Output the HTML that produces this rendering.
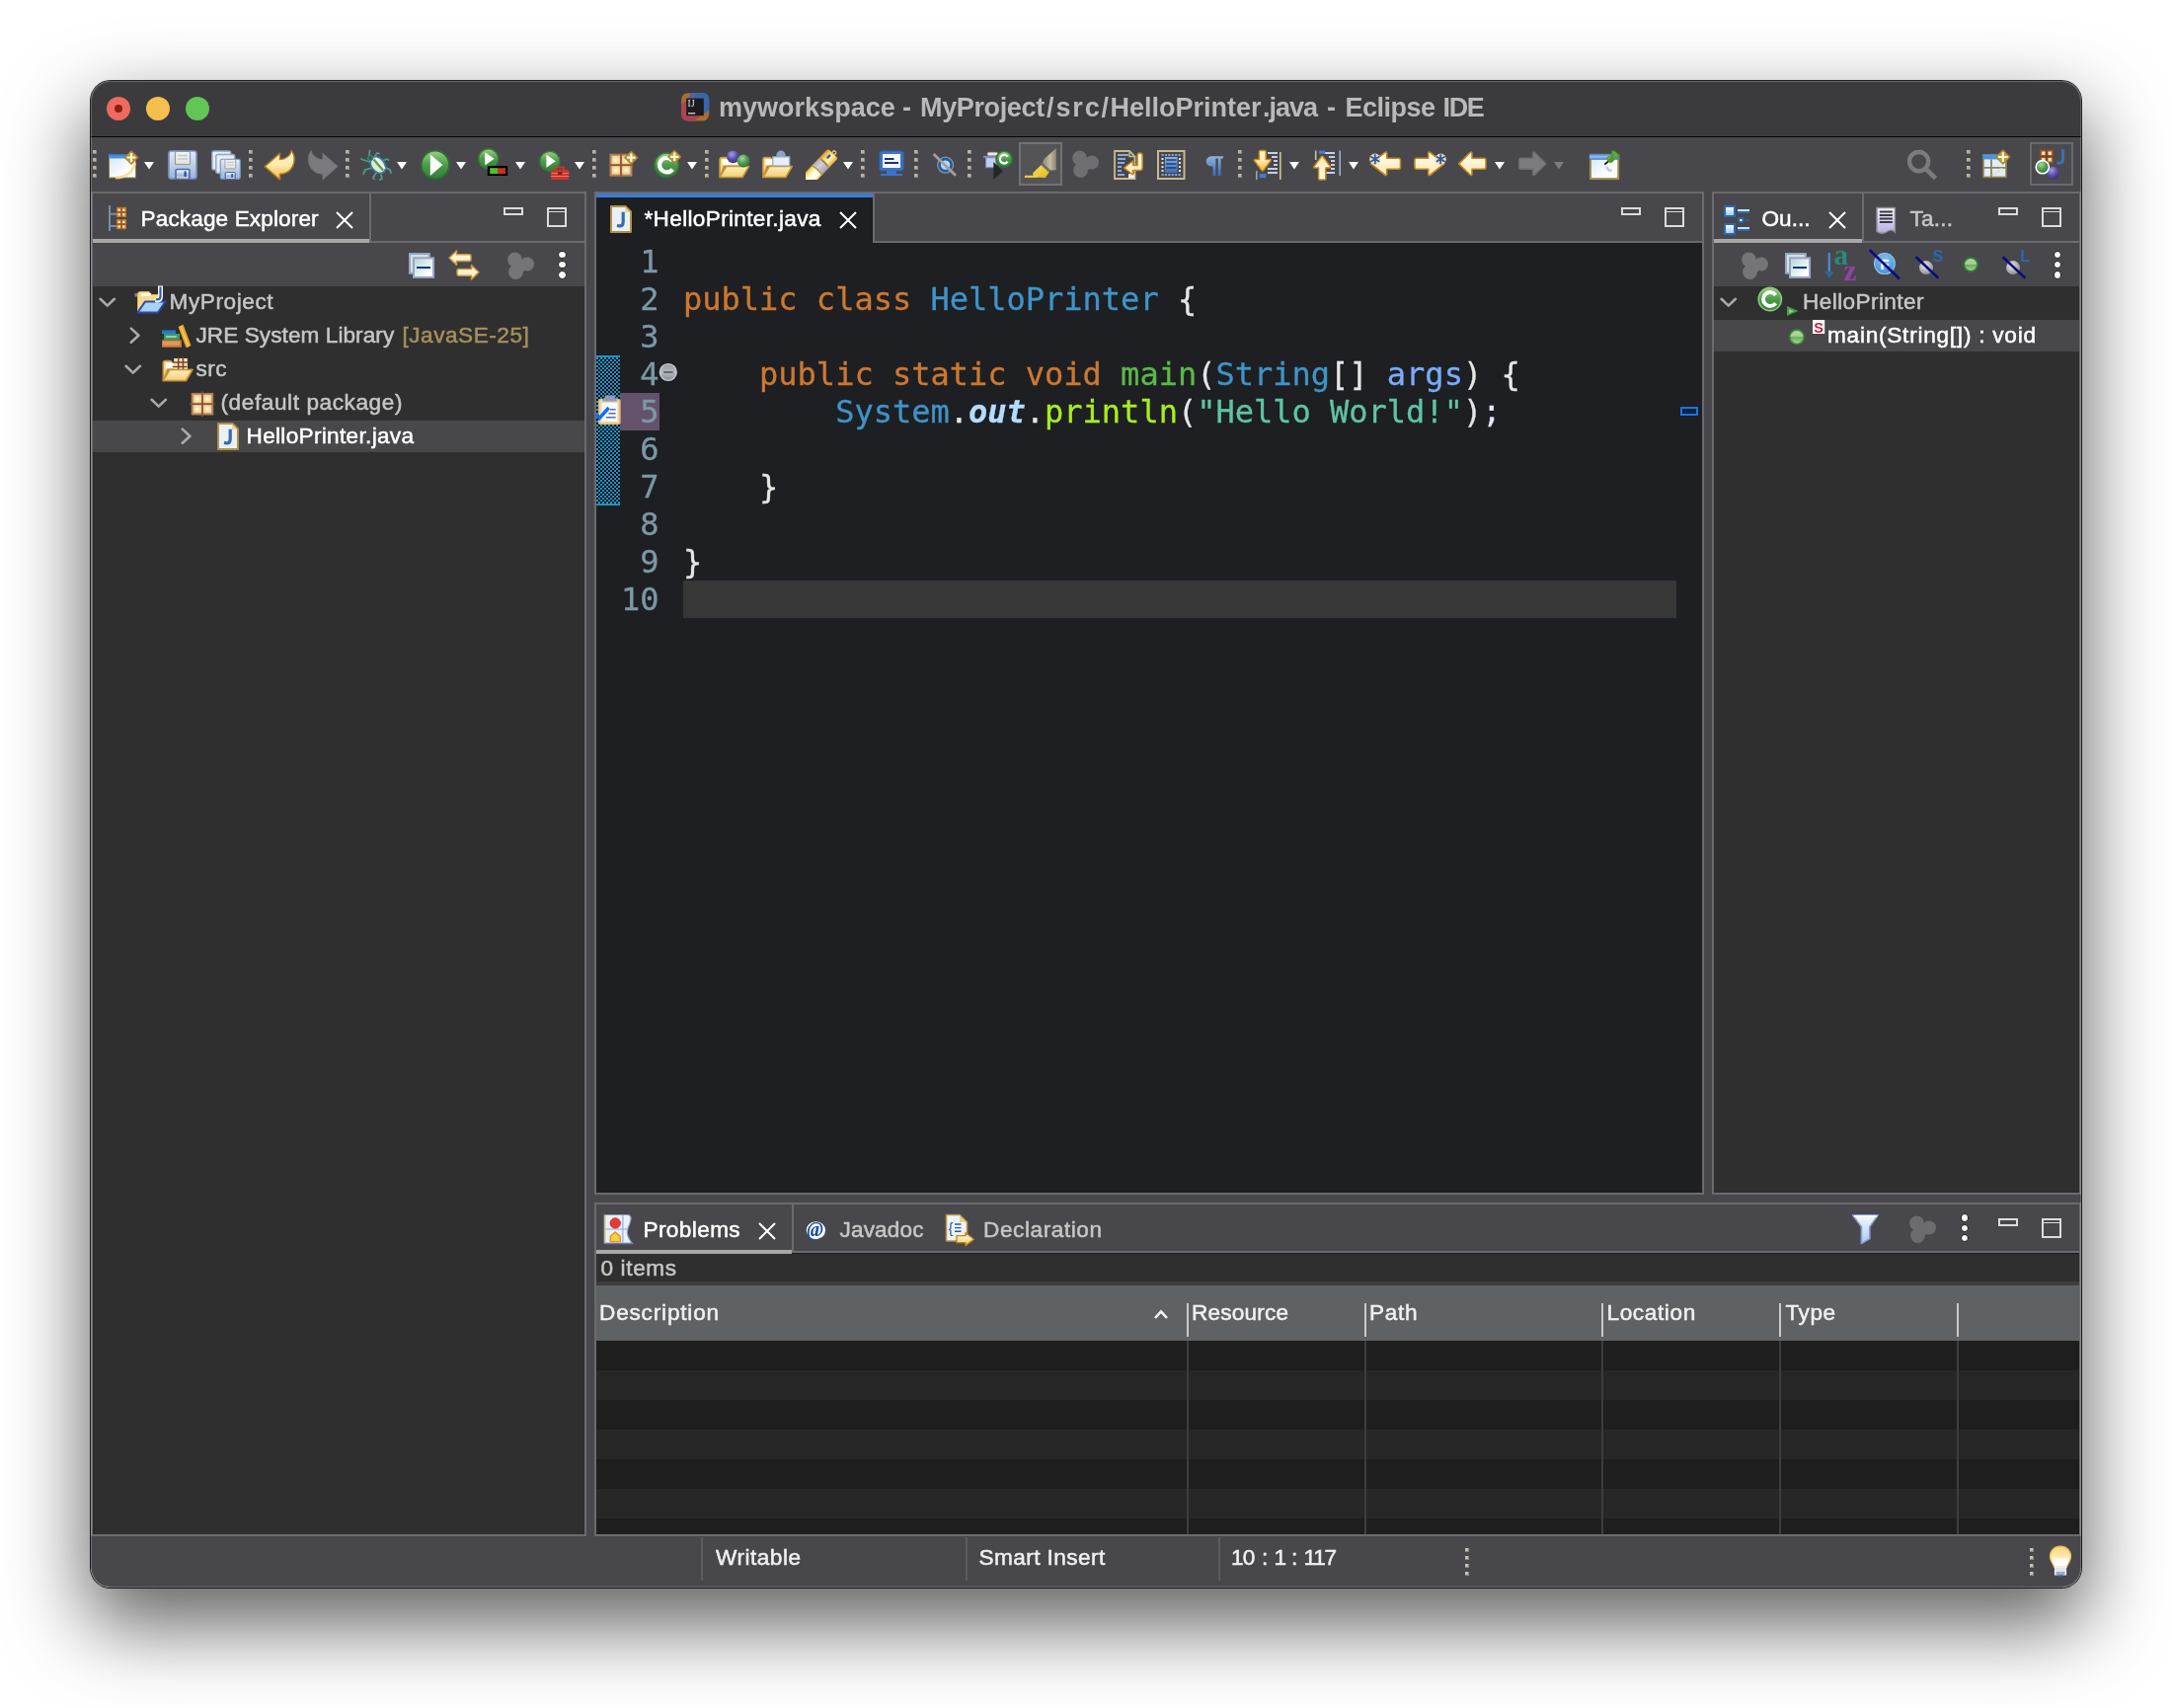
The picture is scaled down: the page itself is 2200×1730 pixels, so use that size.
<!DOCTYPE html>
<html><head><meta charset="utf-8"><title>Eclipse IDE</title>
<style>
*{box-sizing:border-box;margin:0;padding:0}
html,body{width:2200px;height:1730px;background:#fff;overflow:hidden}
body{font-family:"Liberation Sans",sans-serif;position:relative}
#win{position:absolute;left:92px;top:82px;width:2016px;height:1526px;border-radius:20px;overflow:hidden;background:#48484c;}
#shadow{position:absolute;left:92px;top:82px;width:2016px;height:1526px;border-radius:20px;box-shadow:0 0 0 1px rgba(0,0,0,.85),0 34px 80px 4px rgba(0,0,0,.62)}
#pg{position:absolute;left:-92px;top:-82px;width:2200px;height:1730px;will-change:transform}
#pg div,#pg span,#pg svg{position:absolute}
#pg span{white-space:pre}
#pg span span,#pg .code span{position:static}
#hl{position:absolute;left:92px;top:82px;width:2016px;height:1526px;border-radius:20px;box-shadow:inset 0 0 0 1px rgba(255,255,255,.22);pointer-events:none}
.code,.ln{-webkit-text-stroke:0.3px currentColor}
.code{font-family:"DejaVu Sans Mono","Liberation Mono",monospace;font-size:32px;line-height:38px;white-space:pre;left:692.5px}
.ln{font-family:"DejaVu Sans Mono","Liberation Mono",monospace;font-size:32px;line-height:38px;color:#7a98a6;text-align:right;width:66px;left:602px;white-space:pre}
.k{color:#cc7832}.ty{color:#3f94c8}
</style></head><body>
<div id="shadow"></div>
<div id="win"><div id="pg">
<!-- TITLEBAR -->
<div style="left:92px;top:82px;width:2016px;height:56px;background:#3b3b3d"></div>
<div style="left:92px;top:137.7px;width:2016px;height:1.7px;background:#060606"></div>
<div style="left:108px;top:98px;width:24px;height:24px;border-radius:50%;background:#ee6a5f"></div>
<div style="left:116px;top:106px;width:8px;height:8px;border-radius:50%;background:#8e1a10"></div>
<div style="left:148px;top:98px;width:24px;height:24px;border-radius:50%;background:#f5bf4f"></div>
<div style="left:188px;top:98px;width:24px;height:24px;border-radius:50%;background:#62c554"></div>
<!-- PACKAGE EXPLORER -->
<div style="left:92px;top:194px;width:502px;height:1362px;background:#2f2f2f;border:2px solid #6b6b6d"></div>
<div style="left:94px;top:196px;width:498px;height:48px;background:#48484c"></div>
<div style="left:94px;top:244px;width:498px;height:2px;background:#6b6b6d"></div>
<div style="left:94px;top:246px;width:498px;height:44px;background:#48484c"></div>
<div style="left:374px;top:196px;width:2px;height:48px;background:#6b6b6d"></div>
<div style="left:94px;top:242px;width:280px;height:4px;background:#a8a8a8"></div>
<div style="left:94px;top:426px;width:498px;height:32px;background:#48484a"></div>
<!-- EDITOR -->
<div style="left:602px;top:194px;width:1124px;height:1016px;background:#1e1f22;border:2px solid #6b6b6d"></div>
<div style="left:884px;top:196px;width:840px;height:48px;background:#48484c"></div>
<div style="left:884px;top:244px;width:840px;height:2px;background:#6b6b6d"></div>
<div style="left:884px;top:196px;width:2px;height:50px;background:#6b6b6d"></div>
<div style="left:604px;top:196px;width:280px;height:4px;background:#3b7cd6"></div>
<div id="hatch" style="left:604px;top:360px;width:24px;height:152px;background-color:#1a96c8;background-image:linear-gradient(45deg,#1a0505 25%,transparent 25%,transparent 75%,#1a0505 75%),linear-gradient(45deg,#1a0505 25%,transparent 25%,transparent 75%,#1a0505 75%);background-size:4px 4px;background-position:0 2px,2px 0"></div><div style="left:604px;top:360px;width:24px;height:2px;background:#1a96c8"></div><div style="left:604px;top:510px;width:24px;height:2px;background:#1a96c8"></div>
<div style="left:628px;top:398px;width:40px;height:38px;background:#63526a"></div>
<div style="left:692px;top:588px;width:1006px;height:38px;background:#373737"></div>
<div class="ln" style="top:245.5px;left:601.5px">1
2
3
4
5
6
7
8
9
10</div>
<div class="code" style="top:245.5px;left:692px;color:#e6e6e6">
<span class="k">public class</span> <span class="ty">HelloPrinter</span> {

    <span class="k">public static void</span> <span style="color:#5cb84a">main</span>(<span class="ty">String</span>[] <span style="color:#79abff">args</span>) {
        <span class="ty">System</span>.<span style="color:#b4dcff;font-weight:bold;font-style:italic">out</span>.<span style="color:#a7ec21">println</span>(<span style="color:#5ec4a4">"Hello World!"</span>)<span style="color:#e6e6fa">;</span>

    }

}
</div>
<!-- OUTLINE -->
<div style="left:1734px;top:194px;width:374px;height:1016px;background:#2f2f2f;border:2px solid #6b6b6d"></div>
<div style="left:1736px;top:196px;width:370px;height:48px;background:#48484c"></div>
<div style="left:1736px;top:244px;width:370px;height:2px;background:#6b6b6d"></div>
<div style="left:1736px;top:246px;width:370px;height:44px;background:#48484c"></div>
<div style="left:1886px;top:196px;width:2px;height:48px;background:#6b6b6d"></div>
<div style="left:1736px;top:242px;width:150px;height:4px;background:#a8a8a8"></div>
<div style="left:1736px;top:324px;width:370px;height:32px;background:#48484a"></div>
<!-- BOTTOM PANEL -->
<div style="left:602px;top:1218px;width:1506px;height:338px;background:#1e1e1e;border:2px solid #6b6b6d"></div>
<div style="left:604px;top:1220px;width:1502px;height:47px;background:#48484c"></div>
<div style="left:604px;top:1267px;width:1502px;height:2px;background:#6b6b6d"></div>
<div style="left:802px;top:1220px;width:2px;height:47px;background:#6b6b6d"></div>
<div style="left:604px;top:1266px;width:198px;height:4px;background:#a8a8a8"></div>
<div style="left:604px;top:1270px;width:1502px;height:28px;background:#2f2f2f"></div>
<div style="left:604px;top:1298px;width:1502px;height:4px;background:#3d3d3f"></div>
<div style="left:604px;top:1302px;width:1502px;height:56px;background:#5f6264"></div>
<div id="rows" style="left:604px;top:1358px;width:1502px;height:196px;background:repeating-linear-gradient(180deg,#1e1e1e 0,#1e1e1e 30px,#272727 30px,#272727 60px)"></div>
<!-- column seps -->
<div style="left:1202px;top:1358px;width:2px;height:196px;background:#3d3d3d"></div>
<div style="left:1382px;top:1358px;width:2px;height:196px;background:#3d3d3d"></div>
<div style="left:1622px;top:1358px;width:2px;height:196px;background:#3d3d3d"></div>
<div style="left:1802px;top:1358px;width:2px;height:196px;background:#3d3d3d"></div>
<div style="left:1982px;top:1358px;width:2px;height:196px;background:#3d3d3d"></div>
<div style="left:1202px;top:1320px;width:2px;height:34px;background:#c9c9c9"></div>
<div style="left:1382px;top:1320px;width:2px;height:34px;background:#c9c9c9"></div>
<div style="left:1622px;top:1320px;width:2px;height:34px;background:#c9c9c9"></div>
<div style="left:1802px;top:1320px;width:2px;height:34px;background:#c9c9c9"></div>
<div style="left:1982px;top:1320px;width:2px;height:34px;background:#c9c9c9"></div>
<!-- STATUS BAR -->
<div style="left:710px;top:1557px;width:2px;height:44px;background:#5c5c60"></div>
<div style="left:978px;top:1557px;width:2px;height:44px;background:#5c5c60"></div>
<div style="left:1234px;top:1557px;width:2px;height:44px;background:#5c5c60"></div>
<span id="t_ti1" style="left:728.0px;top:93.7px;font-size:27px;line-height:31px;color:#b9b9b9;letter-spacing:0.018px;font-weight:bold;">myworkspace </span>
<span id="t_ti2" style="left:914.0px;top:93.7px;font-size:27px;line-height:31px;color:#b9b9b9;letter-spacing:0.000px;font-weight:bold;">- </span>
<span id="t_ti3" style="left:932.0px;top:93.7px;font-size:27px;line-height:31px;color:#b9b9b9;letter-spacing:-0.360px;font-weight:bold;">MyProject</span>
<span id="t_ti4" style="left:1060.0px;top:93.7px;font-size:27px;line-height:31px;color:#b9b9b9;letter-spacing:1.890px;font-weight:bold;">/src/</span>
<span id="t_ti5" style="left:1124.5px;top:93.7px;font-size:27px;line-height:31px;color:#b9b9b9;letter-spacing:0.000px;font-weight:bold;">HelloPrinter</span>
<span id="t_ti6" style="left:1279.0px;top:93.7px;font-size:27px;line-height:31px;color:#b9b9b9;letter-spacing:-1.035px;font-weight:bold;">.java </span>
<span id="t_ti7" style="left:1344.0px;top:93.7px;font-size:27px;line-height:31px;color:#b9b9b9;letter-spacing:0.000px;font-weight:bold;">- </span>
<span id="t_ti8" style="left:1362.5px;top:93.7px;font-size:27px;line-height:31px;color:#b9b9b9;letter-spacing:-0.510px;font-weight:bold;">Eclipse </span>
<span id="t_ti9" style="left:1461.5px;top:93.7px;font-size:27px;line-height:31px;color:#b9b9b9;letter-spacing:-1.350px;font-weight:bold;">IDE</span>
<span id="t_pe" style="left:142.5px;top:208.9px;font-size:22.6px;line-height:26.6px;color:#ffffff;letter-spacing:0.120px;-webkit-text-stroke:0.5px #ffffff;">Package Explorer</span>
<span id="t_myp" style="left:171.5px;top:292.9px;font-size:22.6px;line-height:26.6px;color:#c6c6c6;letter-spacing:0.585px;-webkit-text-stroke:0.5px #c6c6c6;">MyProject</span>
<span id="t_jre" style="left:198.5px;top:326.9px;font-size:22.6px;line-height:26.6px;color:#c6c6c6;letter-spacing:0.064px;-webkit-text-stroke:0.5px #c6c6c6;">JRE System Library</span>
<span id="t_jse" style="left:407.5px;top:326.9px;font-size:22.6px;line-height:26.6px;color:#a5905c;letter-spacing:0.522px;-webkit-text-stroke:0.5px #a5905c;">[JavaSE-25]</span>
<span id="t_src" style="left:198.5px;top:360.9px;font-size:22.6px;line-height:26.6px;color:#c6c6c6;letter-spacing:0.450px;-webkit-text-stroke:0.5px #c6c6c6;">src</span>
<span id="t_def" style="left:223.5px;top:394.9px;font-size:22.6px;line-height:26.6px;color:#c6c6c6;letter-spacing:0.585px;-webkit-text-stroke:0.5px #c6c6c6;">(default package)</span>
<span id="t_hpj" style="left:249.5px;top:428.9px;font-size:22.6px;line-height:26.6px;color:#ffffff;letter-spacing:0.315px;-webkit-text-stroke:0.5px #ffffff;">HelloPrinter.java</span>
<span id="t_edtab" style="left:652.5px;top:208.9px;font-size:22.6px;line-height:26.6px;color:#ffffff;letter-spacing:0.328px;-webkit-text-stroke:0.5px #ffffff;">*HelloPrinter.java</span>
<span id="t_ou" style="left:1784.5px;top:208.9px;font-size:22.6px;line-height:26.6px;color:#ffffff;letter-spacing:0.045px;-webkit-text-stroke:0.5px #ffffff;">Ou...</span>
<span id="t_ta" style="left:1934.5px;top:208.9px;font-size:22.6px;line-height:26.6px;color:#c6c6c6;letter-spacing:0.225px;-webkit-text-stroke:0.5px #c6c6c6;">Ta...</span>
<span id="t_ohp" style="left:1826.0px;top:292.9px;font-size:22.6px;line-height:26.6px;color:#c6c6c6;letter-spacing:0.409px;-webkit-text-stroke:0.5px #c6c6c6;">HelloPrinter</span>
<span id="t_omain" style="left:1851.0px;top:326.9px;font-size:22.6px;line-height:26.6px;color:#ffffff;letter-spacing:0.756px;-webkit-text-stroke:0.5px #ffffff;">main(String[]) : void</span>
<span id="t_prob" style="left:651.5px;top:1233.3px;font-size:22.6px;line-height:26.6px;color:#ffffff;letter-spacing:0.386px;-webkit-text-stroke:0.5px #ffffff;">Problems</span>
<span id="t_jdoc" style="left:850.5px;top:1233.3px;font-size:22.6px;line-height:26.6px;color:#c6c6c6;letter-spacing:0.150px;-webkit-text-stroke:0.5px #c6c6c6;">Javadoc</span>
<span id="t_decl" style="left:996.0px;top:1233.3px;font-size:22.6px;line-height:26.6px;color:#c6c6c6;letter-spacing:0.576px;-webkit-text-stroke:0.5px #c6c6c6;">Declaration</span>
<span id="t_items" style="left:608.5px;top:1271.7px;font-size:22.6px;line-height:26.6px;color:#c6c6c6;letter-spacing:0.630px;-webkit-text-stroke:0.5px #c6c6c6;">0 items</span>
<span id="t_desc" style="left:607.0px;top:1317.2px;font-size:22.6px;line-height:26.6px;color:#f0f0f0;letter-spacing:0.810px;-webkit-text-stroke:0.5px #f0f0f0;">Description</span>
<span id="t_res" style="left:1207.0px;top:1317.2px;font-size:22.6px;line-height:26.6px;color:#f0f0f0;letter-spacing:0.206px;-webkit-text-stroke:0.5px #f0f0f0;">Resource</span>
<span id="t_path" style="left:1387.0px;top:1317.2px;font-size:22.6px;line-height:26.6px;color:#f0f0f0;letter-spacing:0.660px;-webkit-text-stroke:0.5px #f0f0f0;">Path</span>
<span id="t_loc" style="left:1627.5px;top:1317.2px;font-size:22.6px;line-height:26.6px;color:#f0f0f0;letter-spacing:0.617px;-webkit-text-stroke:0.5px #f0f0f0;">Location</span>
<span id="t_type" style="left:1808.5px;top:1317.2px;font-size:22.6px;line-height:26.6px;color:#f0f0f0;letter-spacing:0.540px;-webkit-text-stroke:0.5px #f0f0f0;">Type</span>
<span id="t_wr" style="left:725.0px;top:1564.9px;font-size:22.6px;line-height:26.6px;color:#f0f0f0;letter-spacing:0.514px;-webkit-text-stroke:0.5px #f0f0f0;">Writable</span>
<span id="t_si" style="left:991.5px;top:1564.9px;font-size:22.6px;line-height:26.6px;color:#f0f0f0;letter-spacing:0.425px;-webkit-text-stroke:0.5px #f0f0f0;">Smart Insert</span>
<span id="t_pos1" style="left:1247.0px;top:1564.9px;font-size:22.6px;line-height:26.6px;color:#f0f0f0;letter-spacing:-0.900px;-webkit-text-stroke:0.5px #f0f0f0;">10 </span>
<span id="t_pos2" style="left:1278.0px;top:1564.9px;font-size:22.6px;line-height:26.6px;color:#f0f0f0;letter-spacing:0.000px;-webkit-text-stroke:0.5px #f0f0f0;">: </span>
<span id="t_pos3" style="left:1290.5px;top:1564.9px;font-size:22.6px;line-height:26.6px;color:#f0f0f0;letter-spacing:0.000px;-webkit-text-stroke:0.5px #f0f0f0;">1 </span>
<span id="t_pos4" style="left:1308.0px;top:1564.9px;font-size:22.6px;line-height:26.6px;color:#f0f0f0;letter-spacing:0.000px;-webkit-text-stroke:0.5px #f0f0f0;">: </span>
<span id="t_pos5" style="left:1320.5px;top:1564.9px;font-size:22.6px;line-height:26.6px;color:#f0f0f0;letter-spacing:-1.260px;-webkit-text-stroke:0.5px #f0f0f0;">117</span>

<svg width="0" height="0" style="left:0;top:0"><defs>
<linearGradient id="gWin" x1="0" y1="0" x2="1" y2="1"><stop offset="0" stop-color="#cfe6fb"/><stop offset=".7" stop-color="#ffffff"/></linearGradient>
<linearGradient id="gFl" x1="0" y1="0" x2="0" y2="1"><stop offset="0" stop-color="#e4ebf5"/><stop offset="1" stop-color="#9db3d8"/></linearGradient>
<linearGradient id="gSh" x1="0" y1="0" x2="0" y2="1"><stop offset="0" stop-color="#ffffff"/><stop offset=".6" stop-color="#9bb8e6"/><stop offset="1" stop-color="#f2dca0"/></linearGradient>
<linearGradient id="gLb" x1="0" y1="0" x2="0" y2="1"><stop offset="0" stop-color="#f4f5f3"/><stop offset=".8" stop-color="#e6e8e6"/><stop offset="1" stop-color="#f0dca8"/></linearGradient>
<linearGradient id="gYa" x1="0" y1="0" x2="0" y2="1"><stop offset="0" stop-color="#fff6d8"/><stop offset=".5" stop-color="#fde9a8"/><stop offset="1" stop-color="#f3b93e"/></linearGradient>
<linearGradient id="gYb" x1="0" y1="0" x2="0" y2="1"><stop offset="0" stop-color="#fffdf0"/><stop offset="1" stop-color="#fbe8b0"/></linearGradient>
<linearGradient id="gGr" x1="0" y1="0" x2="0" y2="1"><stop offset="0" stop-color="#9bd183"/><stop offset=".5" stop-color="#4f9a4a"/><stop offset="1" stop-color="#2f7d38"/></linearGradient>
<radialGradient id="gGs" cx=".4" cy=".3" r=".8"><stop offset="0" stop-color="#a8d89a"/><stop offset=".5" stop-color="#4f9a4f"/><stop offset="1" stop-color="#2a6a30"/></radialGradient>
<radialGradient id="gPs" cx=".4" cy=".3" r=".8"><stop offset="0" stop-color="#a8a0e0"/><stop offset=".5" stop-color="#5a4fb0"/><stop offset="1" stop-color="#35287a"/></radialGradient>
<radialGradient id="gCr" cx=".5" cy=".5" r=".6"><stop offset="0" stop-color="#fff8d0"/><stop offset="1" stop-color="#e8c98a"/></radialGradient>
<linearGradient id="gFo" x1="0" y1="0" x2="0" y2="1"><stop offset="0" stop-color="#fdeeb8"/><stop offset="1" stop-color="#f3cf78"/></linearGradient>
<linearGradient id="gBl" x1="0" y1="0" x2="0" y2="1"><stop offset="0" stop-color="#8fb2dc"/><stop offset="1" stop-color="#3a6cb4"/></linearGradient>
<linearGradient id="gTb" x1="0" y1="0" x2="0" y2="1"><stop offset="0" stop-color="#4a7ec8"/><stop offset=".5" stop-color="#8cc4f4"/><stop offset="1" stop-color="#4a74b8"/></linearGradient>
<linearGradient id="gFd" x1="0" y1="0" x2="0" y2="1"><stop offset="0" stop-color="#d0d8e0"/><stop offset="1" stop-color="#7f8fa0"/></linearGradient>
<linearGradient id="gBulb" x1="0" y1="0" x2="0" y2="1"><stop offset="0" stop-color="#f8d67c"/><stop offset=".45" stop-color="#fbe6a8"/><stop offset=".62" stop-color="#fff8e0"/><stop offset=".75" stop-color="#ffffff"/></linearGradient>
<linearGradient id="gFun" x1="0" y1="0" x2="0" y2="1"><stop offset="0" stop-color="#f4faff"/><stop offset="1" stop-color="#a8c8f0"/></linearGradient>
<linearGradient id="gHy" x1="0" y1="0" x2="1" y2="1"><stop offset="0" stop-color="#f8e060"/><stop offset="1" stop-color="#e0b820"/></linearGradient>
<linearGradient id="gPen" x1="0" y1="0" x2="1" y2="1"><stop offset="0" stop-color="#f8d070"/><stop offset="1" stop-color="#c08820"/></linearGradient>
<linearGradient id="gNib" x1="0" y1="0" x2="0" y2="1"><stop offset="0" stop-color="#f0b030"/><stop offset=".18" stop-color="#fbe680"/><stop offset=".55" stop-color="#ffffff"/><stop offset=".8" stop-color="#fffbe0"/><stop offset="1" stop-color="#f6d860"/></linearGradient><linearGradient id="gBody" x1="0" y1="0" x2="0" y2="1"><stop offset="0" stop-color="#e09a28"/><stop offset=".25" stop-color="#f6c860"/><stop offset=".6" stop-color="#fdf2b8"/><stop offset="1" stop-color="#eeb040"/></linearGradient><linearGradient id="gBand" x1="0" y1="0" x2="0" y2="1"><stop offset="0" stop-color="#b4b0b8"/><stop offset=".4" stop-color="#d4d0d8"/><stop offset="1" stop-color="#a8a0ac"/></linearGradient><clipPath id="cpPen"><rect x="0.9" y="0" width="36" height="32.05"/></clipPath><linearGradient id="gTip" x1="0" y1="0" x2="1" y2="0"><stop offset="0" stop-color="#8e8872"/><stop offset=".55" stop-color="#c4bca4"/><stop offset="1" stop-color="#8a846e"/></linearGradient><linearGradient id="gCol" x1="0" y1="0" x2="1" y2="1"><stop offset="0" stop-color="#b4d4d6"/><stop offset=".8" stop-color="#ffffff"/></linearGradient><linearGradient id="gFm" x1="0" y1="0" x2="0" y2="1"><stop offset="0" stop-color="#9a9a94"/><stop offset=".5" stop-color="#b8b8b8"/><stop offset="1" stop-color="#8c8c8c"/></linearGradient><linearGradient id="gOb" x1="0" y1="0" x2="0" y2="1"><stop offset="0" stop-color="#ffffff"/><stop offset="1" stop-color="#9cc8f8"/></linearGradient><linearGradient id="gTk" x1="0" y1="0" x2="0" y2="1"><stop offset="0" stop-color="#f6f6ff"/><stop offset="1" stop-color="#b4ace0"/></linearGradient><radialGradient id="gFb" cx=".5" cy=".35" r=".7"><stop offset="0" stop-color="#8cc8f4"/><stop offset="1" stop-color="#3a8ad4"/></radialGradient><radialGradient id="gGy" cx=".4" cy=".35" r=".7"><stop offset="0" stop-color="#e8e8e8"/><stop offset="1" stop-color="#8c8c90"/></radialGradient><linearGradient id="gGd" x1="0" y1="0" x2="0" y2="1"><stop offset="0" stop-color="#b6d8a2"/><stop offset=".48" stop-color="#a4cc8e"/><stop offset=".52" stop-color="#6aaa5c"/><stop offset="1" stop-color="#aed69a"/></linearGradient></defs></svg>

<div style="left:94px;top:152px;width:4px;height:4px;background:#b9b3a5;box-shadow:inset -1px -1px 0 #8f897c"></div><div style="left:94px;top:160px;width:4px;height:4px;background:#b9b3a5;box-shadow:inset -1px -1px 0 #8f897c"></div><div style="left:94px;top:168px;width:4px;height:4px;background:#b9b3a5;box-shadow:inset -1px -1px 0 #8f897c"></div><div style="left:94px;top:176px;width:4px;height:4px;background:#b9b3a5;box-shadow:inset -1px -1px 0 #8f897c"></div>
<div style="left:252px;top:152px;width:4px;height:4px;background:#b9b3a5;box-shadow:inset -1px -1px 0 #8f897c"></div><div style="left:252px;top:160px;width:4px;height:4px;background:#b9b3a5;box-shadow:inset -1px -1px 0 #8f897c"></div><div style="left:252px;top:168px;width:4px;height:4px;background:#b9b3a5;box-shadow:inset -1px -1px 0 #8f897c"></div><div style="left:252px;top:176px;width:4px;height:4px;background:#b9b3a5;box-shadow:inset -1px -1px 0 #8f897c"></div>
<div style="left:350px;top:152px;width:4px;height:4px;background:#b9b3a5;box-shadow:inset -1px -1px 0 #8f897c"></div><div style="left:350px;top:160px;width:4px;height:4px;background:#b9b3a5;box-shadow:inset -1px -1px 0 #8f897c"></div><div style="left:350px;top:168px;width:4px;height:4px;background:#b9b3a5;box-shadow:inset -1px -1px 0 #8f897c"></div><div style="left:350px;top:176px;width:4px;height:4px;background:#b9b3a5;box-shadow:inset -1px -1px 0 #8f897c"></div>
<div style="left:600px;top:152px;width:4px;height:4px;background:#b9b3a5;box-shadow:inset -1px -1px 0 #8f897c"></div><div style="left:600px;top:160px;width:4px;height:4px;background:#b9b3a5;box-shadow:inset -1px -1px 0 #8f897c"></div><div style="left:600px;top:168px;width:4px;height:4px;background:#b9b3a5;box-shadow:inset -1px -1px 0 #8f897c"></div><div style="left:600px;top:176px;width:4px;height:4px;background:#b9b3a5;box-shadow:inset -1px -1px 0 #8f897c"></div>
<div style="left:714px;top:152px;width:4px;height:4px;background:#b9b3a5;box-shadow:inset -1px -1px 0 #8f897c"></div><div style="left:714px;top:160px;width:4px;height:4px;background:#b9b3a5;box-shadow:inset -1px -1px 0 #8f897c"></div><div style="left:714px;top:168px;width:4px;height:4px;background:#b9b3a5;box-shadow:inset -1px -1px 0 #8f897c"></div><div style="left:714px;top:176px;width:4px;height:4px;background:#b9b3a5;box-shadow:inset -1px -1px 0 #8f897c"></div>
<div style="left:872px;top:152px;width:4px;height:4px;background:#b9b3a5;box-shadow:inset -1px -1px 0 #8f897c"></div><div style="left:872px;top:160px;width:4px;height:4px;background:#b9b3a5;box-shadow:inset -1px -1px 0 #8f897c"></div><div style="left:872px;top:168px;width:4px;height:4px;background:#b9b3a5;box-shadow:inset -1px -1px 0 #8f897c"></div><div style="left:872px;top:176px;width:4px;height:4px;background:#b9b3a5;box-shadow:inset -1px -1px 0 #8f897c"></div>
<div style="left:926px;top:152px;width:4px;height:4px;background:#b9b3a5;box-shadow:inset -1px -1px 0 #8f897c"></div><div style="left:926px;top:160px;width:4px;height:4px;background:#b9b3a5;box-shadow:inset -1px -1px 0 #8f897c"></div><div style="left:926px;top:168px;width:4px;height:4px;background:#b9b3a5;box-shadow:inset -1px -1px 0 #8f897c"></div><div style="left:926px;top:176px;width:4px;height:4px;background:#b9b3a5;box-shadow:inset -1px -1px 0 #8f897c"></div>
<div style="left:980px;top:152px;width:4px;height:4px;background:#b9b3a5;box-shadow:inset -1px -1px 0 #8f897c"></div><div style="left:980px;top:160px;width:4px;height:4px;background:#b9b3a5;box-shadow:inset -1px -1px 0 #8f897c"></div><div style="left:980px;top:168px;width:4px;height:4px;background:#b9b3a5;box-shadow:inset -1px -1px 0 #8f897c"></div><div style="left:980px;top:176px;width:4px;height:4px;background:#b9b3a5;box-shadow:inset -1px -1px 0 #8f897c"></div>
<div style="left:1254px;top:152px;width:4px;height:4px;background:#b9b3a5;box-shadow:inset -1px -1px 0 #8f897c"></div><div style="left:1254px;top:160px;width:4px;height:4px;background:#b9b3a5;box-shadow:inset -1px -1px 0 #8f897c"></div><div style="left:1254px;top:168px;width:4px;height:4px;background:#b9b3a5;box-shadow:inset -1px -1px 0 #8f897c"></div><div style="left:1254px;top:176px;width:4px;height:4px;background:#b9b3a5;box-shadow:inset -1px -1px 0 #8f897c"></div>
<div style="left:1992px;top:152px;width:4px;height:4px;background:#b9b3a5;box-shadow:inset -1px -1px 0 #8f897c"></div><div style="left:1992px;top:160px;width:4px;height:4px;background:#b9b3a5;box-shadow:inset -1px -1px 0 #8f897c"></div><div style="left:1992px;top:168px;width:4px;height:4px;background:#b9b3a5;box-shadow:inset -1px -1px 0 #8f897c"></div><div style="left:1992px;top:176px;width:4px;height:4px;background:#b9b3a5;box-shadow:inset -1px -1px 0 #8f897c"></div>
<svg style="left:145px;top:163px" width="12" height="10" viewBox="0 0 12 10" ><path d="M1,1 L11,1 L6,8.6 Z" fill="#ffffff"/></svg>
<svg style="left:401px;top:163px" width="12" height="10" viewBox="0 0 12 10" ><path d="M1,1 L11,1 L6,8.6 Z" fill="#ffffff"/></svg>
<svg style="left:461px;top:163px" width="12" height="10" viewBox="0 0 12 10" ><path d="M1,1 L11,1 L6,8.6 Z" fill="#ffffff"/></svg>
<svg style="left:521px;top:163px" width="12" height="10" viewBox="0 0 12 10" ><path d="M1,1 L11,1 L6,8.6 Z" fill="#ffffff"/></svg>
<svg style="left:581px;top:163px" width="12" height="10" viewBox="0 0 12 10" ><path d="M1,1 L11,1 L6,8.6 Z" fill="#ffffff"/></svg>
<svg style="left:695px;top:163px" width="12" height="10" viewBox="0 0 12 10" ><path d="M1,1 L11,1 L6,8.6 Z" fill="#ffffff"/></svg>
<svg style="left:853px;top:163px" width="12" height="10" viewBox="0 0 12 10" ><path d="M1,1 L11,1 L6,8.6 Z" fill="#ffffff"/></svg>
<svg style="left:1305px;top:163px" width="12" height="10" viewBox="0 0 12 10" ><path d="M1,1 L11,1 L6,8.6 Z" fill="#ffffff"/></svg>
<svg style="left:1365px;top:163px" width="12" height="10" viewBox="0 0 12 10" ><path d="M1,1 L11,1 L6,8.6 Z" fill="#ffffff"/></svg>
<svg style="left:1513px;top:163px" width="12" height="10" viewBox="0 0 12 10" ><path d="M1,1 L11,1 L6,8.6 Z" fill="#ffffff"/></svg>
<svg style="left:1573px;top:163px" width="12" height="10" viewBox="0 0 12 10" ><path d="M1,1 L11,1 L6,8.6 Z" fill="#7c7c7e"/></svg>
<svg style="left:108px;top:150px" width="34" height="34" viewBox="0 0 34 34" ><rect x="2.5" y="6.5" width="27" height="23.5" fill="url(#gWin)" stroke="#8f7d48"/><rect x="2" y="6" width="24" height="4.5" fill="#4c93dc"/><rect x="2" y="6" width="24" height="1.5" fill="#3a78c0"/><path d="M9,30 C20,30 27,24 28.5,15" stroke="#f3dc92" stroke-width="3" fill="none" opacity=".85"/><path d="M25,2.5 L32,9.5 L25,16.5 L18,9.5 Z" fill="#b8953a" stroke="#a07c28" stroke-width="1"/><path d="M20.6,9.5 H29.4 M25,5.1 V13.9" stroke="#fff6dc" stroke-width="2.2"/></svg>
<svg style="left:169px;top:150px" width="34" height="34" viewBox="0 0 34 34" ><g transform="translate(1,2) scale(1.0)"><rect x="1" y="1" width="28" height="28" rx="2.5" fill="url(#gFl)" stroke="#7a95c0" stroke-width="1.6"/><rect x="7.5" y="1.5" width="15" height="13" rx="1" fill="url(#gLb)" stroke="#8c9cab" stroke-width="1.2"/><path d="M10,5.5 H20 M10,9 H20" stroke="#c3cad0" stroke-width="1.6"/><rect x="8" y="19.5" width="14" height="10" rx="1.5" fill="url(#gSh)" stroke="#4a69aa" stroke-width="1.6"/><rect x="16.5" y="21.5" width="2.2" height="5.5" fill="#2d4f92"/></g></svg>
<svg style="left:213px;top:150px" width="34" height="34" viewBox="0 0 34 34" ><rect x="1.8" y="3" width="19" height="19" rx="2" fill="#e8eef6" stroke="#8fa2c2" stroke-width="1.4"/><rect x="5.8" y="6.5" width="19" height="19" rx="2" fill="#e8eef6" stroke="#8fa2c2" stroke-width="1.4"/><g transform="translate(9.5,10.5) scale(0.7166666666666667)"><rect x="1" y="1" width="28" height="28" rx="2.5" fill="url(#gFl)" stroke="#7a95c0" stroke-width="1.6"/><rect x="7.5" y="1.5" width="15" height="13" rx="1" fill="url(#gLb)" stroke="#8c9cab" stroke-width="1.2"/><path d="M10,5.5 H20 M10,9 H20" stroke="#c3cad0" stroke-width="1.6"/><rect x="8" y="19.5" width="14" height="10" rx="1.5" fill="url(#gSh)" stroke="#4a69aa" stroke-width="1.6"/><rect x="16.5" y="21.5" width="2.2" height="5.5" fill="#2d4f92"/></g></svg>
<svg style="left:267px;top:150px" width="34" height="34" viewBox="0 0 34 34" ><path d="M1.2,18.6 L16.5,5.2 L16.5,11.6 C22,11.2 27,8 28.3,2.6 C32.5,8 32,16.5 27,22 C24,25 20,26.2 16.5,26.2 L16.5,32 Z" fill="url(#gYa)" stroke="#b27a1e" stroke-width="1.5" stroke-linejoin="round"/></svg>
<svg style="left:311px;top:150px" width="34" height="34" viewBox="0 0 34 34" ><g transform="translate(32.4,0) scale(-1,1)"><path d="M1.2,18.6 L16.5,5.2 L16.5,11.6 C22,11.2 27,8 28.3,2.6 C32.5,8 32,16.5 27,22 C24,25 20,26.2 16.5,26.2 L16.5,32 Z" fill="#7b7b7d" stroke="#6e6e70" stroke-width="1" stroke-linejoin="round"/></g></svg>
<svg style="left:365px;top:150px" width="34" height="34" viewBox="0 0 34 34" ><g stroke="#4f9a8c" stroke-width="1.8" fill="none" stroke-linecap="round"><path d="M9,7 L9.5,2.5 M14,9 L17,5 L19,5.5 M22,13 L27,11 L28.5,12 M10,14 L3,12 L1,11 M12,20 L5,22 L3,26 M16,25 L13,30 L14,31.5 M21,27 L22,31 L20,32 M26,20 L30,22 L31,25"/></g><ellipse cx="17.8" cy="17" rx="6.6" ry="9.2" transform="rotate(-38 17.8 17)" fill="#dfead2" stroke="#3a7fa8" stroke-width="1.8"/><path d="M13.5,11.5 L23,22.5" stroke="#5f9a4a" stroke-width="2.2"/><path d="M15.5,9.8 L25,20.8" stroke="#f6faf0" stroke-width="1.6"/><circle cx="10.2" cy="10.2" r="2.6" fill="#2f6a3a" stroke="#3a7fa8" stroke-width="1"/></svg>
<svg style="left:424px;top:150px" width="34" height="34" viewBox="0 0 34 34" ><circle cx="16.8" cy="16.9" r="14.2" fill="url(#gGr)" stroke="#2c6e30" stroke-width="1.8"/><path d="M11.8,6.4 L11.8,27.9 L24.4,17.1 Z" fill="#fff"/></svg>
<svg style="left:483px;top:150px" width="34" height="34" viewBox="0 0 34 34" ><circle cx="11.7" cy="10.8" r="10" fill="url(#gGr)" stroke="#3a7a3a" stroke-width="1.4"/><path d="M8.2,4.2 L8.2,17.4 L17.6,10.8 Z" fill="#fff"/><rect x="10.8" y="18" width="20.4" height="10" fill="#000"/><rect x="13.2" y="20.2" width="7.8" height="5.8" fill="#4fc12f"/><rect x="21" y="20.2" width="8" height="5.8" fill="#c8321e"/><circle cx="11.7" cy="10.8" r="10.6" fill="none" stroke="#48484c" stroke-width="0"/></svg>
<svg style="left:545px;top:150px" width="34" height="34" viewBox="0 0 34 34" ><circle cx="11.9" cy="13.2" r="10" fill="url(#gGr)" stroke="#3a7a3a" stroke-width="1.4"/><path d="M8.4,6.6 L8.4,19.8 L17.8,13.2 Z" fill="#fff"/><path d="M17.5,18.5 h9.5 v3.5 h-2 v-1.6 h-5.5 v1.6 h-2 z" fill="#c8352b"/><rect x="13.2" y="22" width="18" height="10" fill="#c8352b"/><path d="M13.2,25.5 H31.2 M13.2,28.5 H31.2" stroke="#e87a70" stroke-width="1"/><rect x="20" y="24" width="4.5" height="3" fill="#8e1f18"/></svg>
<svg style="left:615px;top:150px" width="34" height="34" viewBox="0 0 34 34" ><rect x="3" y="6.2" width="22" height="22" fill="#c08a60" stroke="#b07a50" stroke-width="1"/><rect x="4.6" y="7.800000000000001" width="8.4" height="8.4" fill="url(#gCr)"/><rect x="15.0" y="7.800000000000001" width="8.4" height="8.4" fill="url(#gCr)"/><rect x="4.6" y="18.2" width="8.4" height="8.4" fill="url(#gCr)"/><rect x="15.0" y="18.2" width="8.4" height="8.4" fill="url(#gCr)"/><path d="M14.0,4.2 V30.2 M1,17.2 H27" stroke="#8a4e34" stroke-width="1.5"/><path d="M24.3,2.8999999999999995 L31.1,9.7 L24.3,16.5 L17.5,9.7 Z" fill="#b8953a" stroke="#a07c28" stroke-width="1"/><path d="M20.1,9.7 H28.5 M24.3,5.5 V13.9" stroke="#fff6dc" stroke-width="2.2"/></svg>
<svg style="left:660px;top:150px" width="34" height="34" viewBox="0 0 34 34" ><circle cx="15.2" cy="17.1" r="12.2" fill="url(#gGr)" stroke="#2f7a32" stroke-width="1.6"/><path d="M21.3,12.8 A7.3,7.3 0 1 0 21.3,21.4" fill="none" stroke="#fff" stroke-width="4.2"/><path d="M23.2,2.000000000000001 L30.0,8.8 L23.2,15.600000000000001 L16.4,8.8 Z" fill="#b8953a" stroke="#a07c28" stroke-width="1"/><path d="M19.0,8.8 H27.4 M23.2,4.600000000000001 V13.000000000000002" stroke="#fff6dc" stroke-width="2.2"/></svg>
<svg style="left:727px;top:150px" width="36" height="34" viewBox="0 0 36 34" ><g transform="translate(0.5,8)"><path d="M1.5,21 L1.5,3.5 Q1.5,1.5 3.5,1.5 L9,1.5 L11,3.5 L24,3.5 Q25.5,3.5 25.5,5 L25.5,10 L6,10 Z" fill="#f5d687" stroke="#c8953c" stroke-width="1.5" stroke-linejoin="round"/><rect x="4" y="3.2" width="18" height="6" fill="#fffdf6"/><path d="M1.5,21.5 L8,10.5 L31,10.5 L24.5,21.5 Z" fill="url(#gFo)" stroke="#c8953c" stroke-width="1.6" stroke-linejoin="round"/></g><circle cx="15.5" cy="8.8" r="6.4" fill="url(#gPs)"/><circle cx="26" cy="13" r="6.4" fill="url(#gGs)"/></svg>
<svg style="left:771px;top:150px" width="36" height="34" viewBox="0 0 36 34" ><g transform="translate(0.3,8)"><path d="M1.5,21 L1.5,3.5 Q1.5,1.5 3.5,1.5 L9,1.5 L11,3.5 L24,3.5 Q25.5,3.5 25.5,5 L25.5,10 L6,10 Z" fill="#f5d687" stroke="#c8953c" stroke-width="1.5" stroke-linejoin="round"/><rect x="4" y="3.2" width="18" height="6" fill="#fffdf6"/><path d="M1.5,21.5 L8,10.5 L31,10.5 L24.5,21.5 Z" fill="url(#gFo)" stroke="#c8953c" stroke-width="1.6" stroke-linejoin="round"/></g><circle cx="20" cy="7.2" r="4.6" fill="#8fa3c8"/><rect x="11.8" y="8.8" width="17" height="9.2" fill="#e8eefa" stroke="#9aa4b4" stroke-width="1.2"/></svg>
<svg style="left:815px;top:150px" width="36" height="34" viewBox="0 0 36 34" ><g clip-path="url(#cpPen)"><g transform="translate(6.9,28.35) rotate(-46.3)"><rect x="-9" y="-6.85" width="18" height="13.7" fill="url(#gNib)"/><rect x="8" y="-6.85" width="10.5" height="13.7" fill="url(#gBand)"/><path d="M18.5,-6.85 H30 Q31.6,-6.85 31.6,-5 V5 Q31.6,6.85 30,6.85 H18.5 Q20.9,0 18.5,-6.85 Z" fill="url(#gBody)"/><path d="M8,-6.85 Q10.4,0 8,6.85 M18.5,-6.85 Q20.9,0 18.5,6.85" fill="none" stroke="#b8963e" stroke-width="1.3"/><path d="M-9,-6.85 H30 M-9,6.85 H30" stroke="#c89838" stroke-width=".8" opacity=".7"/><rect x="24" y="-2.2" width="4.6" height="2.3" rx=".6" fill="#2f5aa8"/><circle cx="33" cy="0.3" r="1.7" fill="#3a342c" stroke="#e4bc6a" stroke-width="1.5"/></g></g></svg>
<svg style="left:888px;top:150px" width="34" height="34" viewBox="0 0 34 34" ><rect x="2.8" y="3" width="24.4" height="20" rx="2.5" fill="#3d72c6" stroke="#2f5fae" stroke-width="1"/><rect x="6" y="6" width="18" height="14" fill="#f4f8ff"/><path d="M8,11 H17.5 M8,15 H22" stroke="#1f2f7a" stroke-width="2"/><rect x="10" y="23" width="10" height="3" fill="#3d72c6"/><rect x="4" y="26" width="22" height="2" fill="#3d72c6"/></svg>
<svg style="left:942px;top:150px" width="34" height="34" viewBox="0 0 34 34" ><circle cx="15.6" cy="17.1" r="8.6" fill="#c8c8cc" opacity=".55"/><circle cx="15.6" cy="17.1" r="6" fill="#bcd6ee" stroke="#1a5fa8" stroke-width="2.6"/><path d="M3.6,6.1 L26,27.7" stroke="#a0a0a2" stroke-width="2.8"/></svg>
<svg style="left:994px;top:150px" width="36" height="34" viewBox="0 0 36 34" ><rect x="6.4" y="4.4" width="10" height="3.2" rx="1" fill="#f4e6da" stroke="#b8b0c4" stroke-width=".8"/><rect x="2" y="7.8" width="12.4" height="2" fill="#8c84b4"/><rect x="4.6" y="9.6" width="10.4" height="10" fill="#bcd2f0" stroke="#8c88b8" stroke-width="1.2"/><path d="M12.3,14.1 L12.3,32.1 L21.9,23.4 Z" fill="#262628"/><circle cx="23.1" cy="11.2" r="8" fill="url(#gGr)" stroke="#2c7a34" stroke-width="1.6"/><path d="M26.6,8.6 A4.3,4.3 0 1 0 26.6,13.8" fill="none" stroke="#fff" stroke-width="2.3"/></svg>
<div style="left:1032px;top:144px;width:44px;height:44px;background:#545456;border:2px solid #727274"></div>
<svg style="left:1036px;top:148px" width="36" height="36" viewBox="0 0 36 36" ><path d="M33.9,1.9 L33.9,24.3 L28.2,24.6 L19.8,17.1 L21.6,12.9 Z" fill="url(#gTip)"/><path d="M19.8,17.1 L28.2,24.6 L26.6,26.6 L18.4,19.2 Z" fill="#7e7862" opacity=".8"/><path d="M18.4,19.2 L26.6,26.6 L22.8,32.1 L12.5,31.6 Q10,30.5 10.2,27.3 Z" fill="url(#gHy)"/><path d="M1.9,29.8 H16 L14,32.2 H1.9 Z" fill="#f4d63c"/><path d="M1.9,32.2 H14" stroke="#3a3a6a" stroke-width=".6"/></svg>
<svg style="left:1085px;top:152px" width="30" height="30" viewBox="0 0 30 30" ><g fill="#6f6f72" opacity="1"><circle cx="8.5" cy="8" r="7.4"/><circle cx="21" cy="12.5" r="7"/><circle cx="9.5" cy="20.5" r="7.4"/><rect x="6" y="8" width="12" height="12"/></g></svg>
<svg style="left:1127px;top:150px" width="36" height="34" viewBox="0 0 36 34" ><path d="M2,3 H17 L22.5,8.5 V31 H2 Z" fill="none" stroke="#c8ba8c" stroke-width="1.8"/><path d="M17,3 V8.5 H22.5" fill="none" stroke="#c8ba8c" stroke-width="1.4"/><path d="M5,7 H16 M5,11 H13 M5,15 H12 M5,19 H9 M5,23 H9 M5,27 H12" stroke="#8fa8d8" stroke-width="2"/><rect x="16" y="26" width="6" height="4.5" fill="#f4f4f4"/><g transform="translate(2.6,0)"><path d="M25,5 Q27.5,5 27.5,7.5 L27.5,20 Q27.5,22.5 25,22.5 L18,22.5 L18,27 L9,20 L18,13 L18,17.5 L22.5,17.5 L22.5,7.5 Q22.5,5 25,5 Z" fill="url(#gYb)" stroke="#c8881e" stroke-width="1.5" stroke-linejoin="round"/></g></svg>
<svg style="left:1171px;top:150px" width="34" height="34" viewBox="0 0 34 34" ><rect x="2" y="3" width="26.5" height="28" fill="none" stroke="#c8ba8c" stroke-width="2"/><rect x="9" y="9" width="12.5" height="16" fill="url(#gBl)"/><path d="M5.5,7 H25 M5.5,27 H25" stroke="#7fa0d8" stroke-width="2" stroke-dasharray="2.2 1.2"/><path d="M6.5,10 V25 M24,10 V25" stroke="#d8e4f8" stroke-width="2" stroke-dasharray="2 2"/><path d="M10,12 H20.5 M10,16 H20.5 M10,20 H20.5" stroke="#1f3f7a" stroke-width="1.6"/></svg>
<svg style="left:1220px;top:156px" width="22" height="24" viewBox="0 0 22 24" ><path d="M19,2.2 L19,4.6 L16.6,4.6 L16.6,22 L13.8,22 L13.8,4.6 L11.4,4.6 L11.4,22 L8.6,22 L8.6,12.6 C4,12.6 1.8,10.4 1.8,7.4 C1.8,4.2 4.2,2.2 8.2,2.2 Z" fill="url(#gBl)"/></svg>
<svg style="left:1268px;top:150px" width="34" height="34" viewBox="0 0 34 34" ><path d="M16,5 H26 M20,9 H26 M22,13 H26 M22,17 H26 M16,21 H26 M16,25 H26" stroke="#c8cce8" stroke-width="2"/><path d="M28.8,4 V32" stroke="#c8c49a" stroke-width="1.6"/><path d="M4.8,23 V32" stroke="#9ab0c8" stroke-width="1.4"/><rect x="7.8" y="26" width="6.6" height="4" fill="#4a7ac8"/><g transform="translate(1.8,0) scale(1,1)"><path d="M6.6,2.5 L11.4,2.5 Q12.4,2.5 12.4,3.5 L12.4,11.4 L16.4,11.4 Q18.2,11.4 17.2,12.9 L9.9,22.6 Q9,23.6 8.1,22.6 L0.8,12.9 Q-0.2,11.4 1.6,11.4 L5.6,11.4 L5.6,3.5 Q5.6,2.5 6.6,2.5 Z" fill="url(#gYa)" stroke="#c8881e" stroke-width="1.5" stroke-linejoin="round"/></g></svg>
<svg style="left:1328px;top:150px" width="34" height="34" viewBox="0 0 34 34" ><path d="M14,5 H24 M18,9 H24 M20,13 H24 M20,17 H24 M20,21 H24 M14,25 H24" stroke="#c8cce8" stroke-width="2"/><path d="M4.7,2.5 V12 " stroke="#c8c49a" stroke-width="1.6"/><path d="M29.2,2.5 V28" stroke="#9ab0c8" stroke-width="1.6"/><rect x="8" y="2.6" width="6.2" height="3.4" fill="#4a7ac8"/><g transform="translate(2.2,34.5) scale(1,-1)"><path d="M6.4,2.5 L11.6,2.5 Q12.6,2.5 12.6,3.5 L12.6,14.4 L16.4,14.4 Q18.2,14.4 17.2,15.9 L9.9,25.8 Q9,26.8 8.1,25.8 L0.8,15.9 Q-0.2,14.4 1.6,14.4 L5.4,14.4 L5.4,3.5 Q5.4,2.5 6.4,2.5 Z" fill="url(#gYb)" stroke="#c8881e" stroke-width="1.5" stroke-linejoin="round"/></g></svg>
<svg style="left:1387px;top:150px" width="34" height="34" viewBox="0 0 34 34" ><path d="M1.6,15.9 L15.5,4.6 Q17.7,3 17.7,5.6 L17.7,10.2 L29.5,10.2 Q31.5,10.2 31.5,12.2 L31.5,19.3 Q31.5,21.3 29.5,21.3 L17.7,21.3 L17.7,26 Q17.7,28.6 15.5,27 Z" fill="url(#gYb)" stroke="#c0841c" stroke-width="1.6" stroke-linejoin="round"/><circle cx="5.8" cy="11.2" r="5.6" fill="#e8dcc0"/><path d="M5.8,6.199999999999999 V16.2 M1.3999999999999995,8.6 L10.2,13.799999999999999 M1.3999999999999995,13.799999999999999 L10.2,8.6" stroke="#34589a" stroke-width="1.8"/></svg>
<svg style="left:1431px;top:150px" width="34" height="34" viewBox="0 0 34 34" ><g transform="translate(33.4,0) scale(-1,1)"><path d="M1.6,15.9 L15.5,4.6 Q17.7,3 17.7,5.6 L17.7,10.2 L29.5,10.2 Q31.5,10.2 31.5,12.2 L31.5,19.3 Q31.5,21.3 29.5,21.3 L17.7,21.3 L17.7,26 Q17.7,28.6 15.5,27 Z" fill="url(#gYb)" stroke="#c0841c" stroke-width="1.6" stroke-linejoin="round"/></g><circle cx="28.2" cy="11.2" r="5.6" fill="#e8dcc0"/><path d="M28.2,6.199999999999999 V16.2 M23.799999999999997,8.6 L32.6,13.799999999999999 M23.799999999999997,13.799999999999999 L32.6,8.6" stroke="#34589a" stroke-width="1.8"/></svg>
<svg style="left:1476px;top:150px" width="34" height="34" viewBox="0 0 34 34" ><path d="M1.6,15.9 L13,4.6 Q15,3 15,5.6 L15,10.2 L27,10.2 Q29,10.2 29,12.2 L29,19.3 Q29,21.3 27,21.3 L15,21.3 L15,26 Q15,28.6 13,27 Z" fill="url(#gYb)" stroke="#c0841c" stroke-width="1.6" stroke-linejoin="round"/></svg>
<svg style="left:1537px;top:150px" width="34" height="34" viewBox="0 0 34 34" ><g transform="translate(30.6,0) scale(-1,1)"><path d="M1.6,15.9 L13,4.6 Q15,3 15,5.6 L15,10.2 L27,10.2 Q29,10.2 29,12.2 L29,19.3 Q29,21.3 27,21.3 L15,21.3 L15,26 Q15,28.6 13,27 Z" fill="#7c7c7e" stroke="#6c6c6e" stroke-width="1.4" stroke-linejoin="round"/></g></svg>
<svg style="left:1608px;top:148px" width="36" height="36" viewBox="0 0 36 36" ><rect x="3" y="8.9" width="28.2" height="24.2" fill="url(#gWin)" stroke="#a08c52" stroke-width="2"/><rect x="1.9" y="7.9" width="30.3" height="5.9" fill="url(#gTb)"/><path d="M19.6,21.6 Q21.4,25.6 23.8,24.4" stroke="#6a9cb4" stroke-width="2.6" fill="none" opacity=".45" stroke-linecap="round"/><path d="M17.3,18.5 L21.2,15.3" stroke="#111" stroke-width="1.7"/><g transform="rotate(-45 23.3 13.2)"><rect x="19.8" y="9.7" width="7.6" height="7" rx="3" fill="#4e9626"/><ellipse cx="30" cy="13.2" rx="2.3" ry="4.7" fill="#62ae36" stroke="#3f8a20" stroke-width=".9"/><path d="M21,11.4 H26" stroke="#86c85c" stroke-width="1.2" opacity=".7"/></g></svg>
<svg style="left:1928px;top:148px" width="36" height="36" viewBox="0 0 36 36" ><circle cx="15.6" cy="15.6" r="9.6" fill="none" stroke="#7b7b7e" stroke-width="4.4"/><path d="M22.6,23 L32.6,32.6" stroke="#7b7b7e" stroke-width="4.6"/></svg>
<svg style="left:2006px;top:148px" width="36" height="36" viewBox="0 0 36 36" ><rect x="3" y="9" width="23" height="22.4" fill="#dfeefc" stroke="#8f8252" stroke-width="1.6"/><rect x="2.4" y="8.4" width="20" height="5" fill="#4c93dc"/><path d="M11,13.4 V31 M3,21.8 H26 M11,21.8" stroke="#8f8252" stroke-width="1.8"/><path d="M12,30 L23,22" stroke="#f0d898" stroke-width="2.4" stroke-dasharray="1.6 2"/><path d="M22.8,3.5999999999999996 L30.200000000000003,11 L22.8,18.4 L15.4,11 Z" fill="#b8953a" stroke="#a07c28" stroke-width="1"/><path d="M18.0,11 H27.6 M22.8,6.199999999999999 V15.799999999999999" stroke="#fff6dc" stroke-width="2.2"/></svg>
<div style="left:2056px;top:144px;width:44px;height:44px;background:#4b4b4f;border:2px solid #6a6a6e"></div>
<svg style="left:2060px;top:148px" width="36" height="36" viewBox="0 0 36 36" ><rect x="6.5" y="4" width="13" height="13" fill="#a2623a" stroke="#8a4e2c" stroke-width="1"/><rect x="8.0" y="5.5" width="3.5" height="3.5" fill="url(#gCr)"/><rect x="14.5" y="5.5" width="3.5" height="3.5" fill="url(#gCr)"/><rect x="8.0" y="12.0" width="3.5" height="3.5" fill="url(#gCr)"/><rect x="14.5" y="12.0" width="3.5" height="3.5" fill="url(#gCr)"/><path d="M13.0,2 V19 M4.5,10.5 H21.5" stroke="#7a3e22" stroke-width="1.6"/><path d="M29.5,3.2 V13.5 Q29.5,17.2 25.5,17.2 L23.4,17" fill="none" stroke="#3b70b4" stroke-width="3"/><circle cx="19.4" cy="27.1" r="6.4" fill="url(#gPs)"/><circle cx="8.8" cy="21.2" r="6.6" fill="url(#gGs)" stroke="#fff" stroke-width="1.6"/></svg>
<svg style="left:340px;top:214px" width="18" height="18" viewBox="0 0 18 18" ><path d="M1,1 L17,17 M17,1 L1,17" stroke="#fff" stroke-width="2" fill="none"/></svg>
<svg style="left:850px;top:214px" width="18" height="18" viewBox="0 0 18 18" ><path d="M1,1 L17,17 M17,1 L1,17" stroke="#fff" stroke-width="2" fill="none"/></svg>
<svg style="left:1852px;top:214px" width="18" height="18" viewBox="0 0 18 18" ><path d="M1,1 L17,17 M17,1 L1,17" stroke="#fff" stroke-width="2" fill="none"/></svg>
<svg style="left:768px;top:1238px" width="18" height="18" viewBox="0 0 18 18" ><path d="M1,1 L17,17 M17,1 L1,17" stroke="#fff" stroke-width="2" fill="none"/></svg>
<div style="left:510px;top:210px;width:20px;height:8px;border:2px solid #dcdcdc"></div>
<div style="left:554px;top:210px;width:20px;height:20px;border:2px solid #dcdcdc"></div><div style="left:554px;top:213.6px;width:20px;height:1.4px;background:#dcdcdc"></div>
<div style="left:1642px;top:210px;width:20px;height:8px;border:2px solid #dcdcdc"></div>
<div style="left:1686px;top:210px;width:20px;height:20px;border:2px solid #dcdcdc"></div><div style="left:1686px;top:213.6px;width:20px;height:1.4px;background:#dcdcdc"></div>
<div style="left:2024px;top:210px;width:20px;height:8px;border:2px solid #dcdcdc"></div>
<div style="left:2068px;top:210px;width:20px;height:20px;border:2px solid #dcdcdc"></div><div style="left:2068px;top:213.6px;width:20px;height:1.4px;background:#dcdcdc"></div>
<div style="left:2024px;top:1234px;width:20px;height:8px;border:2px solid #dcdcdc"></div>
<div style="left:2068px;top:1234px;width:20px;height:20px;border:2px solid #dcdcdc"></div><div style="left:2068px;top:1237.6px;width:20px;height:1.4px;background:#dcdcdc"></div>
<div style="left:565.4px;top:253.6px;width:8.8px;height:8.8px;border-radius:50%;background:#fff;border:1.2px solid #1c1c1e"></div><div style="left:565.4px;top:263.6px;width:8.8px;height:8.8px;border-radius:50%;background:#fff;border:1.2px solid #1c1c1e"></div><div style="left:565.4px;top:273.8px;width:8.8px;height:8.8px;border-radius:50%;background:#fff;border:1.2px solid #1c1c1e"></div>
<div style="left:2079.5px;top:253.6px;width:8.8px;height:8.8px;border-radius:50%;background:#fff;border:1.2px solid #1c1c1e"></div><div style="left:2079.5px;top:263.6px;width:8.8px;height:8.8px;border-radius:50%;background:#fff;border:1.2px solid #1c1c1e"></div><div style="left:2079.5px;top:273.8px;width:8.8px;height:8.8px;border-radius:50%;background:#fff;border:1.2px solid #1c1c1e"></div>
<div style="left:1985.6px;top:1229.3px;width:8.8px;height:8.8px;border-radius:50%;background:#fff;border:1.2px solid #1c1c1e"></div><div style="left:1985.6px;top:1239.6px;width:8.8px;height:8.8px;border-radius:50%;background:#fff;border:1.2px solid #1c1c1e"></div><div style="left:1985.6px;top:1249.6px;width:8.8px;height:8.8px;border-radius:50%;background:#fff;border:1.2px solid #1c1c1e"></div>
<svg style="left:100.4px;top:301.4px" width="17.5" height="11" viewBox="0 0 17.5 11" ><path d="M1.6,1.8 L8.75,8.6 L15.9,1.8" stroke="#a9a9a9" stroke-width="2.6" fill="none" stroke-linecap="round" stroke-linejoin="round"/></svg>
<svg style="left:131.2px;top:331px" width="11.6" height="17.4" viewBox="0 0 11.6 17.4" ><path d="M1.8,1.6 L9.4,8.7 L1.8,15.8" stroke="#a9a9a9" stroke-width="2.6" fill="none" stroke-linecap="round" stroke-linejoin="round"/></svg>
<svg style="left:126.4px;top:369.2px" width="17.5" height="11" viewBox="0 0 17.5 11" ><path d="M1.6,1.8 L8.75,8.6 L15.9,1.8" stroke="#a9a9a9" stroke-width="2.6" fill="none" stroke-linecap="round" stroke-linejoin="round"/></svg>
<svg style="left:152.3px;top:403.2px" width="17.5" height="11" viewBox="0 0 17.5 11" ><path d="M1.6,1.8 L8.75,8.6 L15.9,1.8" stroke="#a9a9a9" stroke-width="2.6" fill="none" stroke-linecap="round" stroke-linejoin="round"/></svg>
<svg style="left:183px;top:432.6px" width="11.6" height="17.4" viewBox="0 0 11.6 17.4" ><path d="M1.8,1.6 L9.4,8.7 L1.8,15.8" stroke="#a9a9a9" stroke-width="2.6" fill="none" stroke-linecap="round" stroke-linejoin="round"/></svg>
<svg style="left:1742px;top:301.4px" width="17.5" height="11" viewBox="0 0 17.5 11" ><path d="M1.6,1.8 L8.75,8.6 L15.9,1.8" stroke="#a9a9a9" stroke-width="2.6" fill="none" stroke-linecap="round" stroke-linejoin="round"/></svg>
<svg style="left:1168px;top:1325px" width="16" height="12" viewBox="0 0 16 12" ><path d="M2,10 L8,3.4 L14,10" stroke="#f4f4f4" stroke-width="2.6" fill="none"/></svg>
<svg style="left:108px;top:206px" width="24" height="30" viewBox="0 0 24 30" ><path d="M3,2 V28 M3,10.8 H10 M3,23 H10" stroke="#7d8ba5" stroke-width="2" fill="none"/><rect x="10" y="3.8" width="10" height="10.2" fill="#c27a2e"/><rect x="10" y="16" width="10" height="10.2" fill="#c27a2e"/><path d="M15,3.8 V14 M10,8.9 H20 M15,16 V26.2 M10,21.1 H20" stroke="#9a5418" stroke-width="1.2"/><g fill="#fff3c0"><rect x="11.6" y="5.6" width="2.2" height="2.2"/><rect x="16.2" y="5.6" width="2.2" height="2.2"/><rect x="11.6" y="10.2" width="2.2" height="2.2"/><rect x="16.2" y="10.2" width="2.2" height="2.2"/><rect x="11.6" y="17.8" width="2.2" height="2.2"/><rect x="16.2" y="17.8" width="2.2" height="2.2"/><rect x="11.6" y="22.4" width="2.2" height="2.2"/><rect x="16.2" y="22.4" width="2.2" height="2.2"/></g></svg>
<svg style="left:413px;top:255px" width="28" height="28" viewBox="0 0 28 28" ><rect x="2" y="2.1" width="19.9" height="19.6" fill="#cfe4e6" stroke="#9ba5c2" stroke-width="2"/><rect x="6" y="6.3" width="20.1" height="19.6" fill="url(#gCol)" stroke="#9ba5c2" stroke-width="2"/><rect x="9" y="15" width="14" height="2" fill="#0a3a7e"/><rect x="9" y="17" width="14" height="1" fill="#cfe8f8"/></svg>
<svg style="left:1807px;top:255px" width="28" height="28" viewBox="0 0 28 28" ><rect x="2" y="2.1" width="19.9" height="19.6" fill="#cfe4e6" stroke="#9ba5c2" stroke-width="2"/><rect x="6" y="6.3" width="20.1" height="19.6" fill="url(#gCol)" stroke="#9ba5c2" stroke-width="2"/><rect x="9" y="15" width="14" height="2" fill="#0a3a7e"/><rect x="9" y="17" width="14" height="1" fill="#cfe8f8"/></svg>
<svg style="left:454px;top:253px" width="34" height="32" viewBox="0 0 34 32" ><path d="M1,8.2 L8.5,1 L8.5,4.8 L21.5,4.8 Q23,4.8 23,6.3 L23,10.2 Q23,11.6 21.5,11.6 L8.5,11.6 L8.5,15.4 Z" fill="url(#gYb)" stroke="#c8963a" stroke-width="1.5" stroke-linejoin="round"/><g transform="translate(32,14.6) scale(-1,1)"><path d="M1,8.2 L8.5,1 L8.5,4.8 L21.5,4.8 Q23,4.8 23,6.3 L23,10.2 Q23,11.6 21.5,11.6 L8.5,11.6 L8.5,15.4 Z" fill="url(#gYb)" stroke="#c8963a" stroke-width="1.5" stroke-linejoin="round"/></g></svg>
<svg style="left:513px;top:255px" width="30" height="30" viewBox="0 0 30 30" ><g fill="#757578" opacity="1"><circle cx="8.5" cy="8" r="7.4"/><circle cx="21" cy="12.5" r="7"/><circle cx="9.5" cy="20.5" r="7.4"/><rect x="6" y="8" width="12" height="12"/></g></svg>
<svg style="left:1763px;top:255px" width="30" height="30" viewBox="0 0 30 30" ><g fill="#757578" opacity="1"><circle cx="8.5" cy="8" r="7.4"/><circle cx="21" cy="12.5" r="7"/><circle cx="9.5" cy="20.5" r="7.4"/><rect x="6" y="8" width="12" height="12"/></g></svg>
<svg style="left:1933px;top:1231px" width="30" height="30" viewBox="0 0 30 30" ><g fill="#6c6c6f" opacity="1"><circle cx="8.5" cy="8" r="7.4"/><circle cx="21" cy="12.5" r="7"/><circle cx="9.5" cy="20.5" r="7.4"/><rect x="6" y="8" width="12" height="12"/></g></svg>
<svg style="left:136px;top:288px" width="34" height="32" viewBox="0 0 34 32" ><rect x="0.5" y="9" width="4" height="3.6" fill="#8a7a98"/><path d="M3.5,27 L3.5,10 Q3.5,7.5 6,7.5 L15,7.5 L17.5,10.5 L27,10.5 L27,18 L10,18 Z" fill="#f6da8c" stroke="#d8b25a" stroke-width="1"/><rect x="7" y="9" width="10" height="3" fill="#fff8e0"/><path d="M3.5,28.5 L11,17.5 L31.5,17.5 L24,28.5 Z" fill="#a9d2f8" stroke="#3545b2" stroke-width="2" stroke-linejoin="round"/><path d="M26.5,1.5 V12 Q26.5,16 23,16 L21.5,15.6" fill="none" stroke="#fff" stroke-width="5"/><path d="M26.5,2.5 V12 Q26.5,15.4 23.4,15.4 L22,15.2" fill="none" stroke="#2a5ea8" stroke-width="2.2"/></svg>
<svg style="left:163px;top:328px" width="32" height="26" viewBox="0 0 32 26" ><rect x="1" y="6" width="14" height="4" fill="#2c7acc"/><rect x="1" y="6" width="14" height="1.2" fill="#1f5a9c"/><rect x="3" y="10" width="16" height="6.4" fill="#3a9a6c"/><rect x="5" y="12" width="11" height="2" fill="#8fd0a0"/><rect x="1" y="16.4" width="20" height="7.4" fill="#c87a3a"/><rect x="2" y="17.6" width="17" height="4.2" fill="#e09a58"/><path d="M17.5,3 L22.5,0.8 L30.5,22 L25.5,24.2 Z" fill="#e8a62a"/><path d="M20,2.5 L28,23.2" stroke="#f8d060" stroke-width="1.4"/></svg>
<svg style="left:163px;top:361px" width="34" height="28" viewBox="0 0 34 28" ><g transform="translate(0.8,3)"><path d="M1.5,21 L1.5,3.5 Q1.5,1.5 3.5,1.5 L9,1.5 L11,3.5 L24,3.5 Q25.5,3.5 25.5,5 L25.5,10 L6,10 Z" fill="#f5d687" stroke="#c8953c" stroke-width="1.5" stroke-linejoin="round"/><rect x="4" y="3.2" width="18" height="6" fill="#fffdf6"/><path d="M1.5,21.5 L8,10.5 L31,10.5 L24.5,21.5 Z" fill="url(#gFo)" stroke="#c8953c" stroke-width="1.6" stroke-linejoin="round"/></g><g transform="translate(13.2,2)"><rect x="0" y="0" width="13.6" height="11" fill="#f6e2b0"/><path d="M4.5,-1.5 V11.5 M9.2,-1.5 V11.5 M-1.5,4 H15 M-1.5,8.5 H13" stroke="#7a4030" stroke-width="1.5"/></g><path d="M2.3,24.5 L8.8,13.5 L31.8,13.5 L25.3,24.5 Z" fill="url(#gFo)" stroke="#c8953c" stroke-width="1.6" stroke-linejoin="round"/></svg>
<svg style="left:190px;top:394px" width="30" height="30" viewBox="0 0 30 30" ><rect x="4.2" y="4.4" width="21.6" height="21.6" fill="#c08a60" stroke="#b07a50" stroke-width="1"/><rect x="5.800000000000001" y="6.0" width="8.200000000000001" height="8.200000000000001" fill="url(#gCr)"/><rect x="16.0" y="6.0" width="8.200000000000001" height="8.200000000000001" fill="url(#gCr)"/><rect x="5.800000000000001" y="16.200000000000003" width="8.200000000000001" height="8.200000000000001" fill="url(#gCr)"/><rect x="16.0" y="16.200000000000003" width="8.200000000000001" height="8.200000000000001" fill="url(#gCr)"/><path d="M15.0,2.4000000000000004 V28.0 M2.2,15.200000000000001 H27.8" stroke="#8a4e34" stroke-width="1.5"/></svg>
<svg style="left:220px;top:428px" width="24" height="30" viewBox="0 0 24 30" ><path d="M1,1 H15.5 L21,6.5 V27 H1 Z" fill="#eaf0fa" stroke="#b09244" stroke-width="2" stroke-linejoin="round"/><path d="M15,1.5 L20.5,7 L15,7 Z" fill="#ead69a"/><path d="M13.2,6.8 V17 Q13.2,21 9.6,21 L7,20.4" fill="none" stroke="#3a6aa8" stroke-width="3.2"/></svg>
<svg style="left:618px;top:208px" width="24" height="30" viewBox="0 0 24 30" ><path d="M1,1 H15.5 L21,6.5 V27 H1 Z" fill="#eaf0fa" stroke="#b09244" stroke-width="2" stroke-linejoin="round"/><path d="M15,1.5 L20.5,7 L15,7 Z" fill="#ead69a"/><path d="M13.2,6.8 V17 Q13.2,21 9.6,21 L7,20.4" fill="none" stroke="#3a6aa8" stroke-width="3.2"/></svg>
<svg style="left:667px;top:367px" width="20" height="20" viewBox="0 0 20 20" ><circle cx="9.8" cy="10" r="8.4" fill="url(#gFm)" stroke="#c6cde4" stroke-width="1.4"/><rect x="5.2" y="9" width="9.4" height="2" fill="#5a6a92"/></svg>
<svg style="left:603px;top:398px" width="26" height="34" viewBox="0 0 26 34" ><rect x="3.5" y="6.5" width="21.5" height="25" rx="2" fill="#f0d8a0" stroke="#e0b070" stroke-width="1.4"/><rect x="6.5" y="10" width="16" height="19" fill="#f6f8ff"/><path d="M7,8.5 L10.5,2.5 L19,2.5 L22.5,8.5 Z" fill="#8c9abc"/><path d="M15,16.8 H20.6 M13.4,20.8 H20.6 M11,24.8 H20.6" stroke="#5a6ea0" stroke-width="1.6"/><path d="M1.4,21.8 L4.2,25.6 L13.6,15" fill="none" stroke="#0a6cff" stroke-width="3.4"/></svg>
<div style="left:1702px;top:412px;width:18px;height:9px;background:#0c2444;border:2px solid #1e72dc"></div>
<svg style="left:1745px;top:207px" width="30" height="32" viewBox="0 0 30 32" ><rect x="2" y="2" width="10" height="10" fill="url(#gOb)" stroke="#2a68b0" stroke-width="2"/><rect x="2" y="20" width="10" height="10" fill="url(#gOb)" stroke="#2a68b0" stroke-width="2"/><rect x="15" y="5" width="12" height="2" fill="#c4e4ff"/><rect x="15" y="7" width="12" height="2" fill="#2a68b0"/><rect x="15" y="23" width="12" height="2" fill="#c4e4ff"/><rect x="15" y="25" width="12" height="2" fill="#2a68b0"/><rect x="15.4" y="13.2" width="6" height="5.4" fill="#2a68b0"/><rect x="17.4" y="15" width="2" height="2" fill="#fff"/><rect x="23.4" y="15.4" width="3.6" height="1.4" fill="#2a68b0"/></svg>
<svg style="left:1899px;top:209px" width="24" height="30" viewBox="0 0 24 30" ><path d="M2,1.5 H20.4 V26 Q17,22.5 12.5,25.5 Q7.5,29 2,25.5 Z" fill="url(#gTk)" stroke="#8e8e92" stroke-width="1.4"/><path d="M4.8,5.5 H17.8 M4.8,9 H17.8 M4.8,12.5 H17.8 M4.8,16 H17.8" stroke="#3a3a3a" stroke-width="1.8"/></svg>
<svg style="left:1847px;top:252px" width="36" height="34" viewBox="0 0 36 34" ><path d="M5.8,4 V26" stroke="#4a8cd2" stroke-width="2.2"/><path d="M1,23 L5.8,30 L10.6,23 Z" fill="#2f6498"/><text x="10.4" y="16.2" font-family="Liberation Serif,serif" font-weight="bold" font-size="29" fill="#2a8a78">a</text><text x="20.4" y="31.9" font-family="Liberation Serif,serif" font-weight="bold" font-size="29" fill="#9242a4">z</text></svg>
<svg style="left:1892px;top:251px" width="34" height="34" viewBox="0 0 34 34" ><circle cx="16.9" cy="16.1" r="10.4" fill="url(#gFb)" stroke="#8fc0ec" stroke-width="1.2"/><text x="12.4" y="21.6" font-family="Liberation Sans,sans-serif" font-weight="bold" font-size="15" fill="#fff">F</text><path d="M1.6,2 L32,31.5" stroke="#0a0a7c" stroke-width="2.6"/></svg>
<svg style="left:1939px;top:251px" width="30" height="34" viewBox="0 0 30 34" ><circle cx="12" cy="20.1" r="7" fill="url(#gGy)"/><path d="M1.6,9.3 L24.3,30.6" stroke="#0a0a7c" stroke-width="2.6"/><text x="18.4" y="14.4" font-family="Liberation Sans,sans-serif" font-weight="bold" font-size="16" fill="#2a68b0">S</text></svg>
<svg style="left:2027px;top:251px" width="30" height="34" viewBox="0 0 30 34" ><circle cx="12" cy="20.1" r="7" fill="url(#gGy)"/><path d="M1.6,9.3 L24.3,30.6" stroke="#0a0a7c" stroke-width="2.6"/><text x="19.2" y="14.4" font-family="Liberation Sans,sans-serif" font-weight="bold" font-size="16" fill="#2a68b0">L</text></svg>
<svg style="left:1986px;top:258px" width="20" height="20" viewBox="0 0 20 20" ><circle cx="10.2" cy="10" r="7" fill="url(#gGd)" stroke="#2f7a3a" stroke-width="1.8"/></svg>
<svg style="left:1779px;top:289px" width="44" height="34" viewBox="0 0 44 34" ><circle cx="13.8" cy="14" r="11.6" fill="url(#gGr)" stroke="#8cc878" stroke-width="1.6"/><path d="M19.6,9.8 A7,7 0 1 0 19.6,18.2" fill="none" stroke="#fff" stroke-width="3.8"/><path d="M31,21 L31,31 L42.6,26 Z" fill="#4a9a4a"/><path d="M33,24 L33,28.4 L38,26.2 Z" fill="#8cd08c"/></svg>
<svg style="left:1810px;top:331px" width="20" height="20" viewBox="0 0 20 20" ><circle cx="10" cy="10.3" r="7.2" fill="url(#gGd)" stroke="#3a8a3a" stroke-width="1.6"/></svg>
<svg style="left:1835px;top:323px" width="14" height="16" viewBox="0 0 14 16" ><rect x="1" y="1" width="12.2" height="14" fill="#fff"/><text x="2.2" y="13.6" font-family="Liberation Sans,sans-serif" font-weight="bold" font-size="14.5" fill="#c81e3c">S</text></svg>
<svg style="left:611px;top:1229px" width="32" height="32" viewBox="0 0 32 32" ><path d="M1.5,1.5 H24 Q28.5,1.5 28,6 Q27,11 25,15 Q23.5,19 25,23 Q26.5,27 29.5,30.5 H1.5 Z" fill="#e9f1fb" stroke="#8c98bc" stroke-width="1.2"/><path d="M1.5,1.5 V30.5" stroke="#c8ba84" stroke-width="1.6"/><path d="M1.5,30.5 H29.5" stroke="#6a7aa8" stroke-width="1.6"/><path d="M19.8,2 V30 M2,16 H25" stroke="#aabce4" stroke-width="1.6"/><circle cx="12.2" cy="9.9" r="5.2" fill="#e23c32" stroke="#c42a22" stroke-width=".8"/><path d="M7.2,28.6 V23.4 L12.2,19 L17.2,23.4 V28.6 Z" fill="#f9cf48" stroke="#e8921e" stroke-width="1.4"/></svg>
<svg style="left:815px;top:1235px" width="24" height="22" viewBox="0 0 24 22" ><ellipse cx="11.4" cy="11.2" rx="9.6" ry="9" fill="#ffffff"/><text x="2.2" y="17" font-family="Liberation Serif,serif" font-weight="bold" font-style="italic" font-size="20" fill="#1a4f9a">@</text></svg>
<svg style="left:957px;top:1229px" width="32" height="34" viewBox="0 0 32 34" ><path d="M1.5,1.5 H15 L22.5,9 V28 H1.5 Z" fill="#eef2fb" stroke="#b8923e" stroke-width="1.6" stroke-linejoin="round"/><path d="M15,2 L22,9 L15,9 Z" fill="#e6d08c"/><text x="3.4" y="19.6" font-family="Liberation Sans,sans-serif" font-size="15" fill="#2a5aa8">{</text><path d="M10,11 H16.5 M10,14.6 H16.5 M10,18.2 H16.5" stroke="#2a5aa8" stroke-width="1.4"/><path d="M12,22.6 H21 V19.8 L29.4,26.3 L21,32.6 V29.6 H12 Z" fill="url(#gYa)" stroke="#c0861e" stroke-width="1.4" stroke-linejoin="round"/></svg>
<svg style="left:1875px;top:1229px" width="30" height="32" viewBox="0 0 30 32" ><path d="M1.5,1.8 H27.2 L18.8,13.6 V25.5 L10.4,30.6 V13.6 Z" fill="url(#gFun)" stroke="#8e9cce" stroke-width="1.6" stroke-linejoin="round"/><path d="M3,3 H26" stroke="#ffffff" stroke-width="1.6"/></svg>
<div style="left:1484px;top:1568px;width:4px;height:4px;background:#c4beb0;box-shadow:inset -1px -1px 0 #8f897c"></div><div style="left:1484px;top:1576px;width:4px;height:4px;background:#c4beb0;box-shadow:inset -1px -1px 0 #8f897c"></div><div style="left:1484px;top:1584px;width:4px;height:4px;background:#c4beb0;box-shadow:inset -1px -1px 0 #8f897c"></div><div style="left:1484px;top:1592px;width:4px;height:4px;background:#c4beb0;box-shadow:inset -1px -1px 0 #8f897c"></div>
<div style="left:2056px;top:1568px;width:4px;height:4px;background:#c4beb0;box-shadow:inset -1px -1px 0 #8f897c"></div><div style="left:2056px;top:1576px;width:4px;height:4px;background:#c4beb0;box-shadow:inset -1px -1px 0 #8f897c"></div><div style="left:2056px;top:1584px;width:4px;height:4px;background:#c4beb0;box-shadow:inset -1px -1px 0 #8f897c"></div><div style="left:2056px;top:1592px;width:4px;height:4px;background:#c4beb0;box-shadow:inset -1px -1px 0 #8f897c"></div>
<svg style="left:2075px;top:1565px" width="24" height="34" viewBox="0 0 24 34" ><path d="M12,1.2 C18.4,1.2 22.6,5.8 22.6,11.6 C22.6,16 19.6,18.4 18.4,22.4 L5.6,22.4 C4.4,18.4 1.4,16 1.4,11.6 C1.4,5.8 5.6,1.2 12,1.2 Z" fill="url(#gBulb)" stroke="#e8b84a" stroke-width="1.2"/><rect x="6.4" y="22.4" width="11.2" height="7.6" fill="#dfe4ee" stroke="#f4f4f4" stroke-width="1"/><rect x="7.6" y="27" width="8.8" height="3" fill="#9aa8c4"/><rect x="9.6" y="30.4" width="4.8" height="1.6" fill="#3a5a9a"/></svg>
<svg style="left:690px;top:93.6px" width="29" height="29" viewBox="0 0 29 29" ><defs><linearGradient id="gIJ" x1="0" y1="0" x2="1" y2="1"><stop offset="0" stop-color="#b06c34"/><stop offset=".22" stop-color="#a8663a"/><stop offset=".24" stop-color="#4a5aa0"/><stop offset=".5" stop-color="#3a66b0"/><stop offset=".74" stop-color="#5a5aa0"/><stop offset=".76" stop-color="#a86c34"/><stop offset="1" stop-color="#b07430"/></linearGradient><linearGradient id="gIJ2" x1="1" y1="0" x2="0" y2="1"><stop offset="0" stop-color="#3a66b0" stop-opacity="1"/><stop offset=".5" stop-color="#3a66b0" stop-opacity="0"/><stop offset=".5" stop-color="#a84252" stop-opacity="0"/><stop offset="1" stop-color="#a84252" stop-opacity="1"/></linearGradient></defs><rect x="0.2" y="0.2" width="28" height="28.2" rx="6.4" fill="#a86c34"/><path d="M10,0.2 H21.8 Q28.2,0.2 28.2,6.6 V18 L23,21 L6,9 Z" fill="#3a64ae"/><path d="M0.2,12 V21.8 Q0.2,28.4 6.6,28.4 H13 L19,24 L5,8 Z" fill="#a84454"/><path d="M5,8 L10,0.2 L16,0.2 L6,14 Z" fill="#7a5a90" opacity=".5"/><rect x="5.2" y="5.6" width="17.6" height="17.6" fill="#1c1c1c"/><text x="6.6" y="14.4" font-family="Liberation Serif,serif" font-size="9.4" fill="#e4e4e4" letter-spacing="0.2">IJ</text><rect x="7" y="20.2" width="7.2" height="1.2" fill="#e8e8e8"/></svg>
</div></div>
<div id="hl"></div>
</body></html>
